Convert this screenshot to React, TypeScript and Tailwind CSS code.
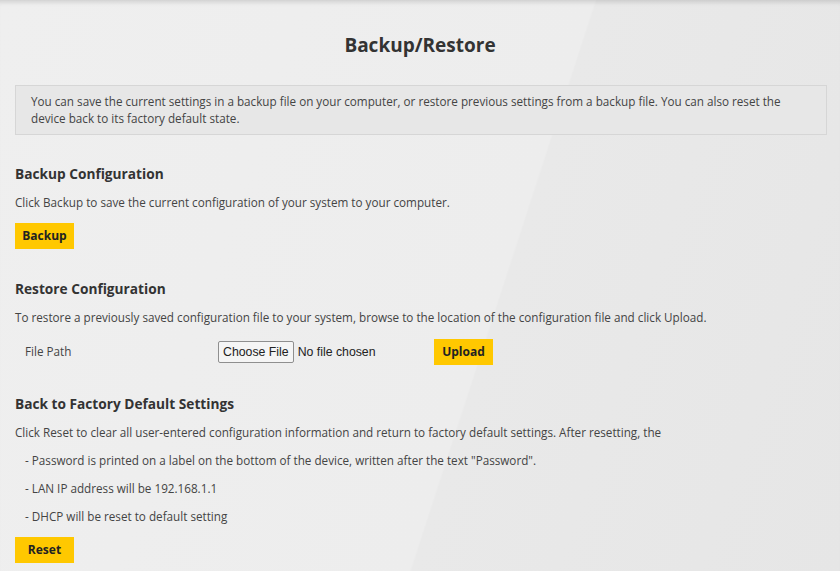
import { useState } from "react";

const font = "font-['Open_Sans','Liberation_Sans',sans-serif]";

const YellowButton = ({ label, className = "" }: { label: string; className?: string }) => (
  <button
    className={`h-[26px] bg-[#ffc800] text-[12px] font-bold text-[#222] ${className}`}
  >
    {label}
  </button>
);

const App = () => {
  const [fileName, setFileName] = useState("");

  const bullets = [
    '- Password is printed on a label on the bottom of the device, written after the text "Password".',
    "- LAN IP address will be 192.168.1.1",
    "- DHCP will be reset to default setting",
  ];

  return (
    <div
      className={`${font} min-h-[571px] w-full text-[#444] bg-[linear-gradient(108deg,#efefef_0%,#ededed_58%,#e9e9e9_58.2%,#e6e6e6_100%)] shadow-[inset_0_6px_5px_-4px_rgba(0,0,0,0.14)]`}
    >
      <div className="flex flex-col px-[15px] pb-[9px]">
        {/* Title */}
        <h1 className="pt-[32px] text-center text-[19px] font-bold leading-[26px] text-[#333]">
          Backup/Restore
        </h1>

        {/* Info box */}
        <div className="mt-[27px] mr-[-2px] border border-[#d6d6d6] bg-[#e7e7e7] px-[15px] py-[7px] text-[11.7px] leading-[17px] text-[#444]">
          You can save the current settings in a backup file on your computer, or restore previous
          settings from a backup file. You can also reset the device back to its factory default state.
        </div>

        {/* Backup */}
        <h2 className="mt-[30px] text-[13.7px] font-bold leading-[18px] text-[#333]">Backup Configuration</h2>
        <p className="mt-[11px] text-[11.7px] leading-[17px]">
          Click Backup to save the current configuration of your system to your computer.
        </p>
        <div className="mt-[11px]">
          <YellowButton label="Backup" className="w-[59px]" />
        </div>

        {/* Restore */}
        <h2 className="mt-[31px] text-[13.7px] font-bold leading-[18px] text-[#333]">Restore Configuration</h2>
        <p className="mt-[11px] text-[11.7px] leading-[17px]">
          To restore a previously saved configuration file to your system, browse to the location of the
          configuration file and click Upload.
        </p>
        <div className="mt-[13px] flex items-center">
          <span className="w-[203px] pl-[10px] text-[11.7px]">File Path</span>
          <label className="flex w-[216px] cursor-pointer items-center font-['Liberation_Sans',sans-serif] text-[12.3px] text-[#222]">
            <span className="flex h-[22px] items-center rounded-[2px] border border-[#8f8f8f] bg-[#f5f5f5] px-[4px]">
              Choose File
            </span>
            <span className="ml-[4px]">{fileName || "No file chosen"}</span>
            <input
              type="file"
              className="hidden"
              onChange={(e) => setFileName(e.target.files?.[0]?.name ?? "")}
            />
          </label>
          <YellowButton label="Upload" className="w-[59px]" />
        </div>

        {/* Factory reset */}
        <h2 className="mt-[30px] text-[13.7px] font-bold leading-[18px] text-[#333]">
          Back to Factory Default Settings
        </h2>
        <p className="mt-[11px] text-[11.7px] leading-[17px]">
          Click Reset to clear all user-entered configuration information and return to factory default
          settings. After resetting, the
        </p>
        <div className="flex flex-col gap-[11px] pt-[11px] pl-[10px] text-[11.7px] leading-[17px]">
          {bullets.map((b) => (
            <p key={b}>{b}</p>
          ))}
        </div>
        <div className="mt-[11px]">
          <YellowButton label="Reset" className="w-[59px]" />
        </div>
      </div>
    </div>
  );
};

export default App;
